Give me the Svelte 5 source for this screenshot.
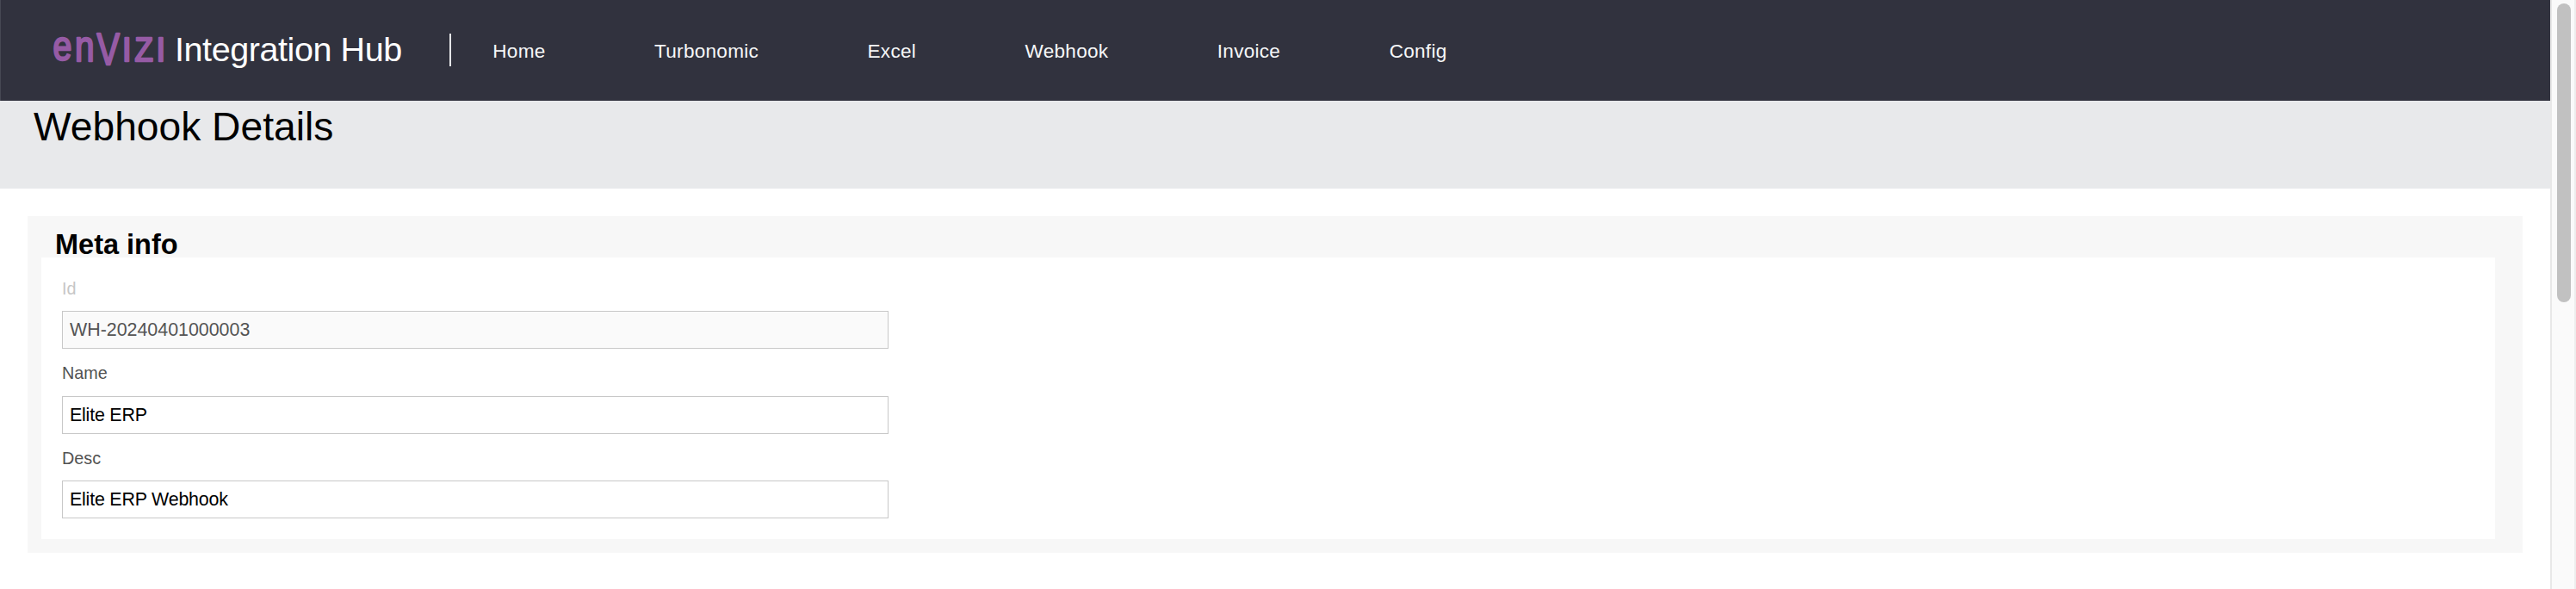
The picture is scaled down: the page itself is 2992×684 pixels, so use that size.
<script>
  const logo = [
    { c: 'e', x: 61.6, y: 70.3, size: 48, sx: 0.82 },
    { c: 'n', x: 87, y: 70.6, size: 49.5, sx: 0.82 },
    { c: 'V', x: 112.4, y: 75, size: 51.5, sx: 0.77 },
    { c: 'I', x: 142, y: 70.6, size: 38, sx: 1 },
    { c: 'Z', x: 156.6, y: 70.6, size: 38, sx: 0.92 },
    { c: 'I', x: 181.4, y: 70.6, size: 38, sx: 1 }
  ];
  const links = ['Home', 'Turbonomic', 'Excel', 'Webhook', 'Invoice', 'Config'];
  const fields = [
    { id: 'id', label: 'Id', value: 'WH-20240401000003', disabled: true },
    { id: 'name', label: 'Name', value: 'Elite ERP', disabled: false },
    { id: 'desc', label: 'Desc', value: 'Elite ERP Webhook', disabled: false }
  ];
</script>

<div class="window">
  <div class="page">
    <header>
      <svg class="logo" width="142" height="84" viewBox="56 16 142 84" aria-label="Envizi">
        {#each logo as g}
          <text transform="translate({g.x} {g.y}) scale({g.sx} 1)" font-size={g.size}>{g.c}</text>
        {/each}
      </svg>
      <span class="brand">Integration Hub</span>
      <span class="divider"></span>
      <nav>
        {#each links as link}
          <a href="#{link}">{link}</a>
        {/each}
      </nav>
    </header>
    <div class="banner"><h1>Webhook Details</h1></div>
    <main>
      <section>
        <h2>Meta info</h2>
        <form>
          {#each fields as f}
            <div class="field">
              <label for={f.id} class:off={f.disabled}>{f.label}</label>
              <input id={f.id} type="text" value={f.value} disabled={f.disabled} />
            </div>
          {/each}
        </form>
      </section>
    </main>
  </div>
  <div class="scrollbar"><div class="thumb"></div></div>
</div>

<style>
  :global(body) {
    margin: 0;
    background: #fff;
  }
  .window {
    display: flex;
    width: 2992px;
    height: 684px;
    overflow: hidden;
    font-family: 'Liberation Sans', Arial, sans-serif;
    box-sizing: border-box;
  }
  .page {
    width: 2962px;
    flex: none;
  }
  header {
    display: flex;
    align-items: flex-start;
    height: 117px;
    box-sizing: border-box;
    padding-left: 55px;
    border-left: 1px solid #464853;
    background: #31323e;
    color: #fff;
  }
  .logo {
    margin-top: 16px;
    flex: none;
  }
  .logo text {
    font-family: 'Liberation Sans', Arial, sans-serif;
    fill: #965ba5;
    stroke: #965ba5;
    stroke-width: 2.4;
    stroke-linejoin: round;
  }
  .brand {
    width: 319px;
    margin: 34px 0 0 5px;
    font-size: 39.5px;
    line-height: 46px;
    letter-spacing: -0.42px;
    white-space: nowrap;
  }
  .divider {
    width: 2px;
    height: 38px;
    margin-top: 39px;
    background: #e4e5e8;
  }
  nav {
    display: flex;
    gap: 126.5px;
    margin: 46px 0 0 48.3px;
  }
  nav a {
    color: #f6f7f8;
    font-size: 22.6px;
    line-height: 27px;
    letter-spacing: 0.25px;
    text-decoration: none;
  }
  .banner {
    height: 102px;
    background: #e8e9eb;
  }
  h1 {
    margin: 0;
    padding: 2px 0 0 39px;
    font-size: 46.2px;
    font-weight: 400;
    line-height: 56px;
    color: #000;
  }
  main {
    padding: 32px;
  }
  section {
    height: 391px;
    box-sizing: border-box;
    padding: 16px 32px 16px 16px;
    background: #f7f7f7;
  }
  h2 {
    height: 32px;
    margin: 0;
    padding-left: 16px;
    font-size: 32.5px;
    line-height: 34px;
    color: #000;
  }
  form {
    display: flex;
    flex-direction: column;
    gap: 16px;
    height: 327px;
    box-sizing: border-box;
    padding: 24px;
    background: #fff;
  }
  .field {
    display: flex;
    flex-direction: column;
    width: 960px;
  }
  label {
    height: 24px;
    margin-bottom: 14px;
    font-size: 19.8px;
    line-height: 25px;
    color: #525252;
  }
  .field:nth-child(2) label {
    margin-bottom: 15px;
  }
  label.off {
    color: #c6c6c6;
  }
  input {
    width: 960px;
    height: 44px;
    box-sizing: border-box;
    padding: 0 8px;
    border: 1px solid #c8c8c8;
    border-radius: 0;
    background: #fff;
    font: 21.4px 'Liberation Sans', Arial, sans-serif;
    letter-spacing: -0.2px;
    color: #000;
  }
  input:disabled {
    background: #fafafa;
    letter-spacing: 0;
    color: #545454;
  }
  .scrollbar {
    width: 30px;
    height: 684px;
    flex: none;
    box-sizing: border-box;
    padding: 4px 0 0 6px;
    border-left: 2px solid #e8e8e8;
    border-right: 2px solid #ededed;
    background: #fafafa;
  }
  .thumb {
    width: 16px;
    height: 347px;
    border-radius: 8px;
    background: #c1c1c1;
  }
</style>
